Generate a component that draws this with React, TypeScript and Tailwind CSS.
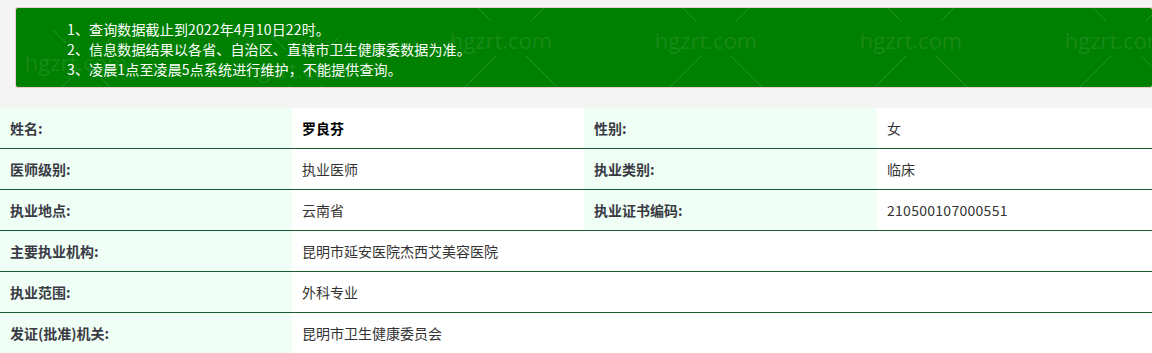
import React from 'react';

const NOTICES = [
  '1、查询数据截止到2022年4月10日22时。',
  '2、信息数据结果以各省、自治区、直辖市卫生健康委数据为准。',
  '3、凌晨1点至凌晨5点系统进行维护，不能提供查询。',
];

// watermark tiles inside the notice box (box-relative coords)
const MARKS = [
  { x: 70, y: 55 },
  { x: 290, y: 62 },
  { x: 495, y: 33 },
  { x: 700, y: 33 },
  { x: 905, y: 33 },
  { x: 1110, y: 33 },
];

const cell = 'flex items-center h-[40px] text-[14px] px-[10px]';
const labelCell = `${cell} bg-[#effff6] font-bold text-[#3a3a44]`;
const valueCell = `${cell} bg-white text-[#333]`;

const Watermark: React.FC = () => (
  <svg className="absolute inset-0 w-full h-full pointer-events-none" width="1138" height="81">
    {MARKS.map((m, i) => (
      <g key={i} stroke="rgba(255,255,255,0.16)" strokeWidth="1">
        <line x1={m.x - 33} y1={m.y - 33} x2={m.x - 20} y2={m.y - 20} />
        <line x1={m.x + 20} y1={m.y - 20} x2={m.x + 33} y2={m.y - 33} />
        <line x1={m.x - 15} y1={m.y + 15} x2={m.x - 60} y2={m.y + 60} />
        <line x1={m.x + 15} y1={m.y + 15} x2={m.x + 60} y2={m.y + 60} />
        <text
          x={m.x - 10}
          y={m.y + 8}
          textAnchor="middle"
          fontSize="22"
          fill="rgba(255,255,255,0.1)"
          stroke="none"
          fontFamily="'Open Sans', 'Noto Sans', sans-serif"
        >
          hgzrt.com
        </text>
      </g>
    ))}
  </svg>
);

const Row: React.FC<{ children: React.ReactNode }> = ({ children }) => (
  <div className="grid grid-cols-[292px_292px_293px_291px] border-b border-[#1b5c34]">{children}</div>
);

export default function App() {
  return (
    <div className="w-full h-[353px] overflow-hidden bg-[#f4f4f4]" style={{ fontFamily: "'Noto Sans CJK SC', 'Noto Sans', sans-serif" }}>
      <div className="w-[1168px] pt-[7px]">
        {/* notice */}
        <div className="relative ml-[15px] mr-[15px] h-[81px] rounded-[3px] border border-[#e9cfcf] bg-[#008000] pt-[11px] pl-[51px] overflow-hidden">
          <Watermark />
          <ul className="relative text-white text-[14px] leading-[20px] tracking-[0.01em]">
            {NOTICES.map((n) => (
              <li key={n}>{n}</li>
            ))}
          </ul>
        </div>

        {/* doctor info */}
        <div className="mt-[20px]">
          <Row>
            <div className={labelCell}>姓名:</div>
            <div className={`${valueCell} font-bold text-black`}>罗良芬</div>
            <div className={labelCell}>性别:</div>
            <div className={valueCell}>女</div>
          </Row>
          <Row>
            <div className={labelCell}>医师级别:</div>
            <div className={valueCell}>执业医师</div>
            <div className={labelCell}>执业类别:</div>
            <div className={valueCell}>临床</div>
          </Row>
          <Row>
            <div className={labelCell}>执业地点:</div>
            <div className={valueCell}>云南省</div>
            <div className={labelCell}>执业证书编码:</div>
            <div className={`${valueCell} tracking-[0.02em]`}>210500107000551</div>
          </Row>
          <Row>
            <div className={labelCell}>主要执业机构:</div>
            <div className={`${valueCell} col-span-3`}>昆明市延安医院杰西艾美容医院</div>
          </Row>
          <Row>
            <div className={labelCell}>执业范围:</div>
            <div className={`${valueCell} col-span-3`}>外科专业</div>
          </Row>
          <Row>
            <div className={labelCell}>发证(批准)机关:</div>
            <div className={`${valueCell} col-span-3`}>昆明市卫生健康委员会</div>
          </Row>
        </div>
      </div>
    </div>
  );
}
